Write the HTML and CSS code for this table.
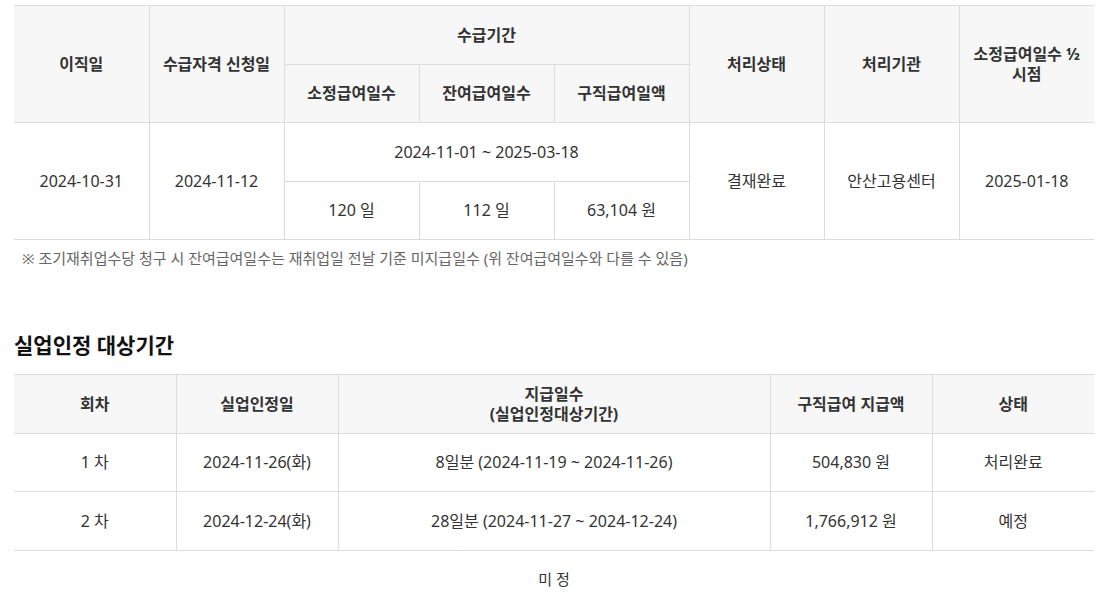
FILE: index.html
```html
<!DOCTYPE html>
<html lang="ko">
<head>
<meta charset="utf-8">
<link rel="stylesheet" href="styles.css">
</head>
<body>
<div class="wrap">
  <table class="tbl tbl-main">
    <thead>
      <tr>
        <th rowspan="2">이직일</th>
        <th rowspan="2">수급자격 신청일</th>
        <th colspan="3">수급기간</th>
        <th rowspan="2">처리상태</th>
        <th rowspan="2">처리기관</th>
        <th rowspan="2">소정급여일수 ½<br>시점</th>
      </tr>
      <tr>
        <th>소정급여일수</th>
        <th>잔여급여일수</th>
        <th>구직급여일액</th>
      </tr>
    </thead>
    <tbody>
      <tr>
        <td rowspan="2">2024-10-31</td>
        <td rowspan="2">2024-11-12</td>
        <td colspan="3">2024-11-01 ~ 2025-03-18</td>
        <td rowspan="2">결재완료</td>
        <td rowspan="2">안산고용센터</td>
        <td rowspan="2">2025-01-18</td>
      </tr>
      <tr>
        <td>120 일</td>
        <td>112 일</td>
        <td>63,104 원</td>
      </tr>
    </tbody>
  </table>
  <p class="note">※ 조기재취업수당 청구 시 잔여급여일수는 재취업일 전날 기준 미지급일수 (위 잔여급여일수와 다를 수 있음)</p>

  <h2 class="title">실업인정 대상기간</h2>
  <table class="tbl tbl-period">
    <colgroup>
      <col class="c15"><col class="c15"><col class="c40"><col class="c15"><col class="c15">
    </colgroup>
    <thead>
      <tr>
        <th>회차</th>
        <th>실업인정일</th>
        <th>지급일수<br>(실업인정대상기간)</th>
        <th>구직급여 지급액</th>
        <th>상태</th>
      </tr>
    </thead>
    <tbody>
      <tr>
        <td>1 차</td>
        <td>2024-11-26(화)</td>
        <td>8일분 (2024-11-19 ~ 2024-11-26)</td>
        <td>504,830 원</td>
        <td>처리완료</td>
      </tr>
      <tr>
        <td>2 차</td>
        <td>2024-12-24(화)</td>
        <td>28일분 (2024-11-27 ~ 2024-12-24)</td>
        <td>1,766,912 원</td>
        <td>예정</td>
      </tr>
    </tbody>
  </table>
  <p class="pending">미 정</p>
</div>
</body>
</html>
```

FILE: styles.css
```css
* { box-sizing: border-box; }
html, body { margin: 0; padding: 0; background: #fff; }
body {
  font-family: "Noto Sans", "Noto Sans CJK KR", sans-serif;
  color: #333;
  font-size: 16px;
}
.wrap { padding: 5px 4px 0 14px; }
.tbl {
  width: 1080px;
  border-collapse: collapse;
  table-layout: fixed;
  border-top: 1px solid #dcdcdc;
}
.tbl th, .tbl td {
  border: 1px solid #dcdcdc;
  text-align: center;
  vertical-align: middle;
  padding: 0 6px;
  line-height: 20px;
  height: 58.5px;
}
.tbl tr > :first-child { border-left: none; }
.tbl tr > :last-child { border-right: none; }
.tbl-main tbody tr:nth-child(2) td:last-child { border-right: 1px solid #dcdcdc; }
.tbl th {
  background: #f7f7f7;
  font-weight: 700;
  color: #333;
}
.tbl td { color: #333; font-weight: 400; }
.c15 { width: 162px; }
.c40 { width: 432px; }
.note {
  margin: 8px 0 0 8px;
  font-size: 15px;
  color: #666;
  line-height: 20px;
}
.title {
  margin: 62px 0 0 0;
  font-size: 21px;
  font-weight: 700;
  color: #111;
  line-height: 30px;
  height: 44px;
}
.pending {
  margin: 17px 0 0 0;
  text-align: center;
  font-size: 15px;
  color: #333;
  line-height: 22px;
}
```
